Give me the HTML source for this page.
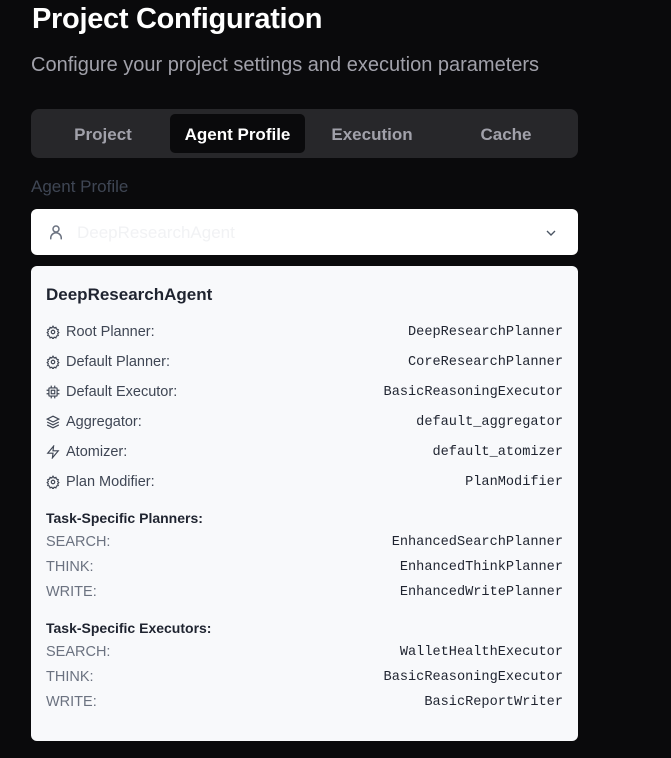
<!DOCTYPE html>
<html><head><meta charset="utf-8"><style>
*{box-sizing:border-box;margin:0;padding:0}
body{width:671px;height:758px;background:#0a0a0c;font-family:"Liberation Sans",sans-serif;position:relative;overflow:hidden}
.a{position:absolute}
h1{position:absolute;left:32px;top:3px;font-size:29px;font-weight:700;color:#fff;letter-spacing:-0.3px}
.sub{left:31px;top:54px;font-size:20px;color:#a1a1aa}
.tabs{left:31px;top:109px;width:547px;height:49px;background:#27272a;border-radius:8px}
.tab{position:absolute;top:5px;height:39px;line-height:41px;font-size:17px;font-weight:700;color:#a1a1aa;text-align:center}
.act{background:#0a0a0c;color:#fff;border-radius:5px}
.lbl{left:31px;top:177px;font-size:17px;color:#3f4654}
.sel{left:31px;top:209px;width:547px;height:46px;background:#fff;border-radius:6px}
.panel{left:31px;top:266px;width:547px;height:475px;background:#f8f9fb;border-radius:6px}
.in{position:absolute;left:0;right:0;top:1px;bottom:0}
.r{position:absolute;left:15px;right:15px;height:20px;font-size:14.5px;color:#3f4654;display:flex;align-items:center}
.r svg{margin-right:6px}
.r .v{margin-left:auto;font-family:"Liberation Mono",monospace;font-size:13.6px;color:#1f2430}
.h{position:absolute;left:15px;font-size:14px;font-weight:700;color:#1f2430}
.g{color:#6b7280}
</style></head><body>
<h1>Project Configuration</h1>
<div class="a sub">Configure your project settings and execution parameters</div>
<div class="a tabs">
<div class="tab" style="left:5px;width:134px">Project</div>
<div class="tab act" style="left:139px;width:135px">Agent Profile</div>
<div class="tab" style="left:274px;width:134px">Execution</div>
<div class="tab" style="left:408px;width:134px">Cache</div>
</div>
<div class="a lbl">Agent Profile</div>
<div class="a sel">
<svg class="a" style="left:16px;top:14px" width="18" height="18" viewBox="0 0 24 24" fill="none" stroke="#6b7280" stroke-width="2" stroke-linecap="round"><circle cx="12" cy="8" r="4"/><path d="M5 21v-1a7 7 0 0 1 14 0v1"/></svg>
<div class="a" style="left:46px;top:14px;font-size:17px;color:#f1f2f4">DeepResearchAgent</div>
<svg class="a" style="left:512px;top:16px" width="16" height="16" viewBox="0 0 24 24" fill="none" stroke="#4b5563" stroke-width="2"><path d="M6 9l6 6 6-6"/></svg>
</div>
<div class="a panel"><div class="in">
<div class="h" style="top:18px;font-size:17px">DeepResearchAgent</div>
<div class="r" style="top:55px"><svg width="14" height="14" viewBox="0 0 24 24" fill="none" stroke="#3f4654" stroke-width="2"><circle cx="12" cy="12" r="3"/><path d="M12 2l2 3 3-1 1 3 3 1-1 3 2 2-2 2 1 3-3 1-1 3-3-1-2 3-2-3-3 1-1-3-3-1 1-3-2-2 2-2-1-3 3-1 1-3 3 1z"/></svg>Root Planner:<span class="v">DeepResearchPlanner</span></div>
<div class="r" style="top:85px"><svg width="14" height="14" viewBox="0 0 24 24" fill="none" stroke="#3f4654" stroke-width="2"><circle cx="12" cy="12" r="3"/><path d="M12 2l2 3 3-1 1 3 3 1-1 3 2 2-2 2 1 3-3 1-1 3-3-1-2 3-2-3-3 1-1-3-3-1 1-3-2-2 2-2-1-3 3-1 1-3 3 1z"/></svg>Default Planner:<span class="v">CoreResearchPlanner</span></div>
<div class="r" style="top:115px"><svg width="14" height="14" viewBox="0 0 24 24" fill="none" stroke="#3f4654" stroke-width="2"><rect x="5" y="5" width="14" height="14" rx="1"/><rect x="9" y="9" width="6" height="6"/><path d="M9 1v4M15 1v4M9 19v4M15 19v4M1 9h4M1 15h4M19 9h4M19 15h4"/></svg>Default Executor:<span class="v">BasicReasoningExecutor</span></div>
<div class="r" style="top:145px"><svg width="14" height="14" viewBox="0 0 24 24" fill="none" stroke="#3f4654" stroke-width="2"><path d="M12 2l10 5-10 5L2 7z M2 12l10 5 10-5 M2 17l10 5 10-5"/></svg>Aggregator:<span class="v">default_aggregator</span></div>
<div class="r" style="top:175px"><svg width="14" height="14" viewBox="0 0 24 24" fill="none" stroke="#3f4654" stroke-width="2"><path d="M13 2L3 14h9l-1 8 10-12h-9z"/></svg>Atomizer:<span class="v">default_atomizer</span></div>
<div class="r" style="top:205px"><svg width="14" height="14" viewBox="0 0 24 24" fill="none" stroke="#3f4654" stroke-width="2"><circle cx="12" cy="12" r="3"/><path d="M12 2l2 3 3-1 1 3 3 1-1 3 2 2-2 2 1 3-3 1-1 3-3-1-2 3-2-3-3 1-1-3-3-1 1-3-2-2 2-2-1-3 3-1 1-3 3 1z"/></svg>Plan Modifier:<span class="v">PlanModifier</span></div>
<div class="h" style="top:243px">Task-Specific Planners:</div>
<div class="r g" style="top:265px">SEARCH:<span class="v">EnhancedSearchPlanner</span></div>
<div class="r g" style="top:290px">THINK:<span class="v">EnhancedThinkPlanner</span></div>
<div class="r g" style="top:315px">WRITE:<span class="v">EnhancedWritePlanner</span></div>
<div class="h" style="top:353px">Task-Specific Executors:</div>
<div class="r g" style="top:375px">SEARCH:<span class="v">WalletHealthExecutor</span></div>
<div class="r g" style="top:400px">THINK:<span class="v">BasicReasoningExecutor</span></div>
<div class="r g" style="top:425px">WRITE:<span class="v">BasicReportWriter</span></div>
</div></div>
</body></html>
